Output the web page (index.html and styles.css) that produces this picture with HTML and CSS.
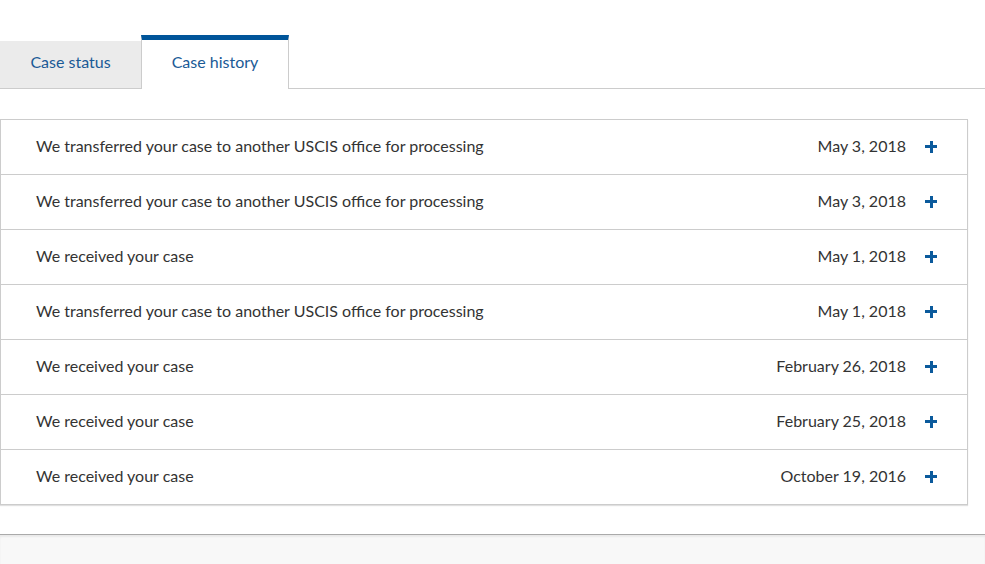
FILE: index.html
```html
<!DOCTYPE html>
<html>
<head>
<meta charset="utf-8">
<link rel="stylesheet" href="styles.css">
</head>
<body>
<div class="page">
  <div class="tabs">
    <div class="tab">Case status</div>
    <div class="tab active">Case history</div>
    <div class="tab-fill"></div>
  </div>
  <div class="panel">
    <div class="row"><span class="msg">We transferred your case to another USCIS office for processing</span><span class="date">May 3, 2018</span><span class="plus"></span></div>
    <div class="row"><span class="msg">We transferred your case to another USCIS office for processing</span><span class="date">May 3, 2018</span><span class="plus"></span></div>
    <div class="row"><span class="msg">We received your case</span><span class="date">May 1, 2018</span><span class="plus"></span></div>
    <div class="row"><span class="msg">We transferred your case to another USCIS office for processing</span><span class="date">May 1, 2018</span><span class="plus"></span></div>
    <div class="row"><span class="msg">We received your case</span><span class="date">February 26, 2018</span><span class="plus"></span></div>
    <div class="row"><span class="msg">We received your case</span><span class="date">February 25, 2018</span><span class="plus"></span></div>
    <div class="row"><span class="msg">We received your case</span><span class="date">October 19, 2016</span><span class="plus"></span></div>
  </div>
</div>
<div class="footer"></div>
</body>
</html>
```
FILE: styles.css
```css
html, body {
  margin: 0;
  padding: 0;
  background: #fff;
  font-family: Lato, "Open Sans", sans-serif;
}
.page {
  width: 985px;
  padding-top: 35px;
  height: 499px;
  box-sizing: content-box;
}
.tabs {
  display: flex;
  align-items: flex-end;
  height: 54px;
}
.tab {
  width: 141px;
  height: 48px;
  background: #ebebeb;
  color: #1a5a96;
  font-size: 16px;
  display: flex;
  align-items: center;
  justify-content: center;
  box-sizing: border-box;
  border-bottom: 1px solid #ccc;
  padding-bottom: 7px;
}
.tab.active {
  width: 148px;
  height: 54px;
  background: #fff;
  border-top: 5px solid #00559a;
  border-left: 1px solid #ccc;
  border-right: 1px solid #ccc;
  border-bottom: none;
  padding-bottom: 6px;
}
.tab-fill {
  flex: 1;
  height: 1px;
  background: #ccc;
}
.panel {
  margin-top: 30px;
  width: 968px;
  border: 1px solid #ccc;
  box-sizing: border-box;
  box-shadow: 0 1px 1px rgba(0,0,0,0.12);
}
.row {
  height: 55px;
  display: flex;
  align-items: center;
  padding: 0 30px 0 35px;
  border-top: 1px solid #ccc;
  box-sizing: border-box;
  color: #333;
  font-size: 16px;
  padding-bottom: 3px;
}
.row:first-child {
  border-top: none;
  height: 54px;
}
.msg {
  flex: 1;
}
.date {
  margin-right: 19px;
}
.plus {
  width: 12px;
  height: 12px;
  position: relative;
  top: 1px;
}
.plus::before, .plus::after {
  content: "";
  position: absolute;
  background: #0b5a9c;
}
.plus::before {
  left: 0; top: 4.5px; width: 12px; height: 3px;
}
.plus::after {
  left: 4.5px; top: 0; width: 3px; height: 12px;
}
.footer {
  height: 30px;
  background: #f8f8f8;
  border-top: 1px solid #aaa;
  box-shadow: inset 0 2px 2px rgba(0,0,0,0.06);
}
```
